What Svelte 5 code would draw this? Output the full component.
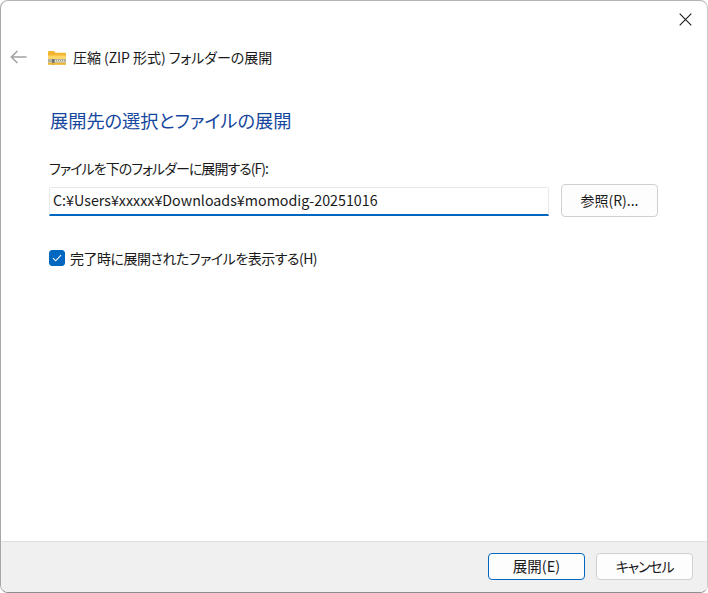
<script>
  let path = 'C:¥Users¥xxxxx¥Downloads¥momodig-20251016';
  let showFiles = true;
</script>

<div class="window">
  <main class="content">
    <div class="close-row">
      <svg class="close" width="13" height="13" viewBox="0 0 13 13" aria-label="閉じる"><path d="M.7.7l11.6 11.6M12.3.7.7 12.3" fill="none" stroke="#1a1a1a" stroke-width="1.1"/></svg>
    </div>
    <div class="nav">
      <svg class="back" width="17" height="14" viewBox="0 0 17 14"><path d="M16.5 7H1.6M7.4 1 1.4 7l6 6" fill="none" stroke="#a3a3a3" stroke-width="1.6"/></svg>
      <svg class="folder" width="18" height="15" viewBox="0 0 18 15">
        <path d="M0 2.2C0 1.4.5 1 1.2 1h4.6l1.8 1.8H17c.6 0 1 .4 1 1V6H0z" fill="#f2b530"/>
        <path d="M0 5.5h18v8.3c0 .6-.4 1-1 1H1c-.6 0-1-.4-1-1z" fill="#fcd667"/>
        <path d="M0 9h18v3.4H0z" fill="#b5b2a2"/>
        <path d="M5 10h12v1.4H5z" fill="#e9e7d8"/>
        <path d="M6 10.7h11" stroke="#8f8d7e" stroke-width="1" stroke-dasharray="1 1" fill="none"/>
        <path d="M4 9h2.4v5.8H4z" fill="#75756b"/>
        <path d="M0 13h18v1.8H0z" fill="#eab838"/>
      </svg>
      <span class="title">圧縮 (ZIP 形式) フォルダーの展開</span>
    </div>
    <h1>展開先の選択とファイルの展開</h1>
    <label class="path-label" for="dest">ファイルを下のフォルダーに展開する(F):</label>
    <div class="path-row">
      <input id="dest" class="path" value={path} />
      <button class="browse">参照(R)...</button>
    </div>
    <label class="check">
      <span class="box" class:on={showFiles}>
        <svg width="10" height="8" viewBox="0 0 10 8"><path d="M1 4.2 3.7 6.8 9 1.2" fill="none" stroke="#fff" stroke-width="1.1"/></svg>
      </span>
      <span class="check-text">完了時に展開されたファイルを表示する(H)</span>
    </label>
  </main>
  <footer>
    <button class="primary">展開(E)</button>
    <button class="cancel">キャンセル</button>
  </footer>
</div>

<style>
  :global(body) { margin: 0; background: #fff; }
  .window {
    box-sizing: border-box;
    width: 708px;
    height: 593px;
    display: flex;
    flex-direction: column;
    background: #fff;
    border: 1px solid #b4b4b4;
    border-left-color: #a8a8a8;
    border-bottom-color: #8f8f8f;
    border-right-color: #c8c8c8;
    border-radius: 8px;
    overflow: hidden;
    color: #1a1a1a;
    font-family: "Noto Sans CJK JP", "Noto Sans", sans-serif;
    font-feature-settings: "palt";
    font-size: 14px;
  }
  .content { flex: 1; padding: 0 48px; min-height: 0; }
  .close-row { display: flex; justify-content: flex-end; height: 36px; margin-right: -33px; padding-top: 12px; box-sizing: border-box; }
  .nav { display: flex; align-items: center; height: 40px; margin-left: -39px; }
  .folder { margin-left: 21px; }
  .title { margin-left: 7px; font-size: 14px; line-height: 20px; letter-spacing: -0.05px; }
  h1 { margin: 30px 0 0 1px; font-size: 18.2px; font-weight: 400; color: #16479e; line-height: 26px; }
  .path-label { display: block; margin-top: 25px; line-height: 20px; font-size: 14px; letter-spacing: -0.95px; }
  .path-row { display: flex; align-items: center; gap: 12px; margin-top: 6px; height: 33px; }
  .path {
    box-sizing: border-box;
    width: 500px;
    height: 29px;
    margin: 1px 0 0;
    padding: 0 3px 3px;
    border: 1px solid #e8e8e8;
    border-bottom: 2px solid #0067c0;
    border-radius: 2px 2px 0 0;
    outline: none;
    font: inherit;
    font-feature-settings: inherit;
    font-size: 14.27px;
    color: #1a1a1a;
    background: #fff;
  }
  button {
    box-sizing: border-box;
    width: 97px;
    padding: 0;
    background: #fdfdfd;
    border: 1px solid #d0d0d0;
    border-radius: 4px;
    font: inherit;
    font-feature-settings: inherit;
    color: #1a1a1a;
  }
  .browse { height: 33px; padding-bottom: 2px; }
  .check { display: flex; align-items: center; gap: 5px; margin-top: 31px; height: 20px; }
  .check-text { letter-spacing: -0.5px; }
  .box { box-sizing: border-box; width: 16px; height: 16px; border-radius: 3px; border: 1px solid #8a8a8a; display: flex; align-items: center; justify-content: center; }
  .box.on { background: #0067c0; border-color: #0067c0; }
  footer {
    box-sizing: border-box;
    height: 51px;
    background: #f0f0f0;
    border-top: 1px solid #dfdfdf;
    display: flex;
    justify-content: flex-end;
    align-items: flex-start;
    gap: 11px;
    padding: 11px 14px 0 0;
  }
  footer button { height: 27px; padding-bottom: 2px; }
  .primary { border: 1px solid #0067c0; font-size: 14.5px; }
  .cancel { letter-spacing: -1.2px; }
</style>
